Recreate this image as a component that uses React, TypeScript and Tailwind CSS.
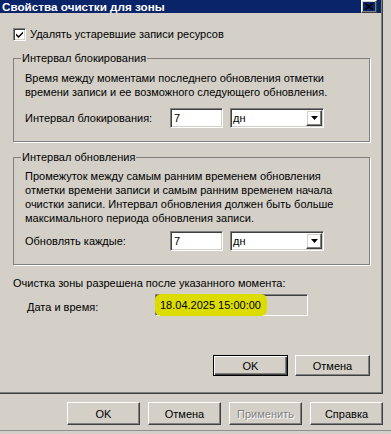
const raised =
  'border border-t-white border-l-white border-r-[#404040] border-b-[#404040] shadow-[inset_-1px_-1px_0_#808080,inset_1px_1px_0_#d4d0c8]';
const sunken =
  'border border-t-[#808080] border-l-[#808080] border-r-white border-b-white shadow-[inset_1px_1px_0_#404040,inset_-1px_-1px_0_#d4d0c8]';

function Button({ label, isDefault, disabled, w }: { label: string; isDefault?: boolean; disabled?: boolean; w: string }) {
  return (
    <button
      className={
        w +
        ' flex items-center justify-center bg-[#d4d0c8] ' +
        (isDefault
          ? 'border border-black shadow-[inset_1px_1px_0_#fff,inset_-1px_-1px_0_#404040,inset_-2px_-2px_0_#808080]'
          : raised) +
        (disabled ? ' text-[#808080] [text-shadow:1px_1px_0_#fff]' : ' text-black')
      }
    >
      {label}
    </button>
  );
}

function Dropdown() {
  return (
    <div className={sunken + ' flex h-[20px] w-[94px] items-center bg-white pl-[2px] pr-[1px]'}>
      <span className="flex-1">дн</span>
      <div className={raised + ' flex h-[16px] w-[16px] items-center justify-center'}>
        <svg width="7" height="4" viewBox="0 0 7 4">
          <path d="M0 0h7L3.5 4z" fill="#000" />
        </svg>
      </div>
    </div>
  );
}

function IntervalRow({ label }: { label: string }) {
  return (
    <div className="flex items-center">
      <span className="w-[145px]">{label}</span>
      <div className={sunken + ' flex h-[20px] w-[53px] items-center bg-white px-[3px]'}>7</div>
      <div className="ml-[7px]">
        <Dropdown />
      </div>
    </div>
  );
}

export default function App() {
  return (
    <div className="flex h-[434px] w-[391px] flex-col bg-[#d4d0c8] text-[11px] leading-[14px] text-black [font-family:'Liberation_Sans',Arial,sans-serif]">
      {/* cleanup dialog */}
      <div className="flex h-[394px] w-[383px] flex-col border-r border-b border-[#404040] shadow-[inset_-1px_-1px_0_#808080]">
        {/* title bar */}
        <div className="flex h-[13px] w-[381px] items-center justify-between bg-[#0a246a] pl-[2px] pr-[4px]">
          <span className="text-[11.7px] leading-[13px] font-bold text-white">Свойства очистки для зоны</span>
          <div className={raised + ' flex h-[13px] w-[16px] items-center justify-center'}>
            <svg width="8" height="7" viewBox="0 0 8 7">
              <path d="M0.5 0.5l7 6M7.5 0.5l-7 6" stroke="#000" strokeWidth="1.6" />
            </svg>
          </div>
        </div>

        <div className="flex flex-1 flex-col pr-[12px] pl-[13px]">
          <label className="mt-[14px] flex items-center">
            <div className={sunken + ' flex h-[13px] w-[13px] items-center justify-center bg-white'}>
              <svg width="7" height="7" viewBox="0 0 7 7">
                <path d="M0 2.5l2.5 2.5L7 0.5v2L2.5 7 0 4.5z" fill="#000" />
              </svg>
            </div>
            <span className="ml-[4px]">Удалять устаревшие записи ресурсов</span>
          </label>

          <fieldset className="mt-[10px] border border-[#808080] px-0 pb-[13px] shadow-[1px_1px_0_#fff]">
            <legend className="ml-[7px] px-px">Интервал блокирования</legend>
            <div className="px-[11px]">
              <p className="mt-[6px]">
                Время между моментами последнего обновления отметки
                <br />
                времени записи и ее возможного следующего обновления.
              </p>
              <div className="mt-[9px]">
                <IntervalRow label="Интервал блокирования:" />
              </div>
            </div>
          </fieldset>

          <fieldset className="mt-[8px] border border-[#808080] px-0 pb-[13px] shadow-[1px_1px_0_#fff]">
            <legend className="ml-[7px] px-px">Интервал обновления</legend>
            <div className="px-[11px]">
              <p className="mt-[5px]">
                Промежуток между самым ранним временем обновления
                <br />
                отметки времени записи и самым ранним временем начала
                <br />
                очистки записи. Интервал обновления должен быть больше
                <br />
                максимального периода обновления записи.
              </p>
              <div className="mt-[6px]">
                <IntervalRow label="Обновлять каждые:" />
              </div>
            </div>
          </fieldset>

          <p className="mt-[11px]">Очистка зоны разрешена после указанного момента:</p>
          <div className="mt-[4px] flex items-center pl-[14px]">
            <span className="w-[128px] pt-[4px]">Дата и время:</span>
            <div className={sunken + ' flex h-[22px] w-[153px] items-center'}>
              <span className="-ml-[1px] rounded-[6px] bg-[#dcdc00] py-[4px] pr-[6px] pl-[5px]">18.04.2025 15:00:00</span>
            </div>
          </div>

          <div className="mt-auto mb-[17px] flex justify-end gap-[7px]">
            <Button label="OK" isDefault w="w-[75px] h-[21px]" />
            <Button label="Отмена" w="w-[75px] h-[21px]" />
          </div>
        </div>
      </div>

      {/* parent property sheet buttons */}
      <div className="mt-[8px] flex justify-end gap-[8px] pr-[8px]">
        <Button label="OK" w="w-[73px] h-[23px]" />
        <Button label="Отмена" w="w-[73px] h-[23px]" />
        <Button label="Применить" disabled w="w-[73px] h-[23px]" />
        <Button label="Справка" w="w-[73px] h-[23px]" />
      </div>
      <div className="mt-auto mb-[3px] h-px bg-[#909090]" />
    </div>
  );
}
